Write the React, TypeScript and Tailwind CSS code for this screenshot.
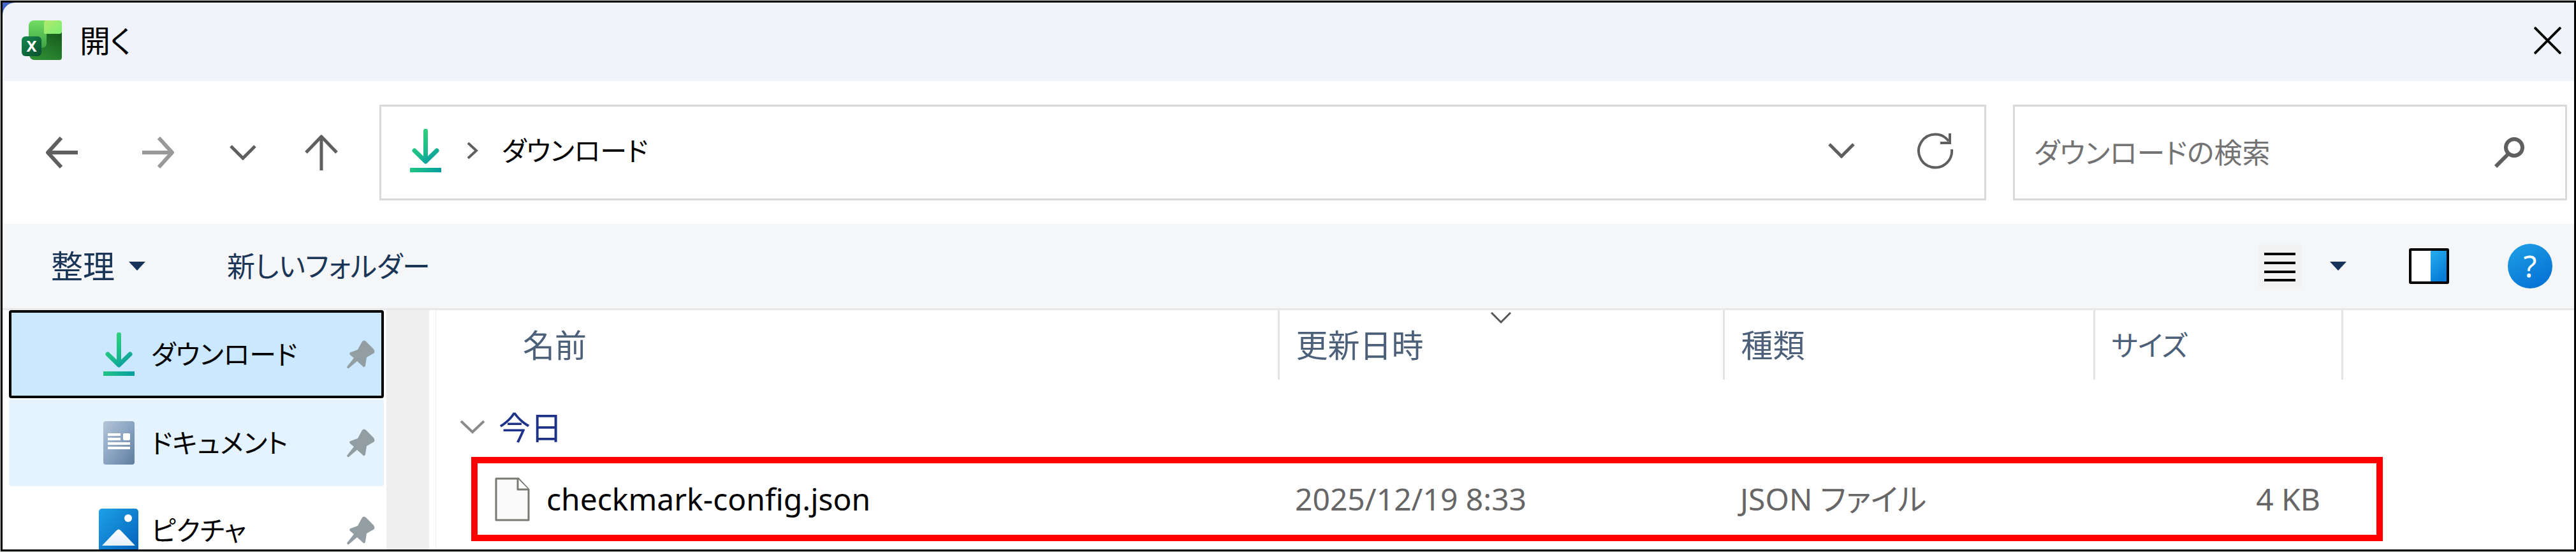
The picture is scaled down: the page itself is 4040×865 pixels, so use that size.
import { ReactNode } from "react"

interface IconProps {
    className?: string
}

const ExcelIcon: React.FC = () => (
    <svg width="63" height="63" viewBox="0 0 63 63">
        <defs>
            <linearGradient id="excel-lime" x1="0" y1="0" x2="1" y2="1">
                <stop offset="0" stopColor="#b4ea6c" />
                <stop offset="1" stopColor="#78ee72" />
            </linearGradient>
            <linearGradient id="excel-mid" x1="0" y1="0" x2="0" y2="1">
                <stop offset="0" stopColor="#72dc62" />
                <stop offset="1" stopColor="#3fa445" />
            </linearGradient>
            <linearGradient id="excel-dark" x1="1" y1="0" x2="0.4" y2="1">
                <stop offset="0" stopColor="#135a1c" />
                <stop offset="1" stopColor="#2f8c33" />
            </linearGradient>
            <linearGradient id="excel-badge" x1="0" y1="0" x2="1" y2="1">
                <stop offset="0" stopColor="#15884b" />
                <stop offset="1" stopColor="#0a4f30" />
            </linearGradient>
        </defs>
        <path d="M12 18h51v40a4 4 0 0 1-4 4H20a8 8 0 0 1-8-8z" fill="url(#excel-dark)" />
        <path d="M19 0h20v36a7 7 0 0 1-7 7H11V8a8 8 0 0 1 8-8z" fill="url(#excel-mid)" />
        <path d="M39 0h20a4 4 0 0 1 4 4v13a4 4 0 0 1-4 4H35V4a4 4 0 0 1 4-4z" fill="url(#excel-lime)" />
        <rect y="25" width="31" height="31" rx="6" fill="url(#excel-badge)" />
        <text x="15.500" y="49" textAnchor="middle" fontSize="24" fontWeight="700" fill="#fff">
            X
        </text>
    </svg>
)

const DownloadIcon: React.FC<IconProps> = ({ className }) => (
    <svg width="49" height="68" viewBox="0 0 49 68" fill="none" className={className}>
        <defs>
            <linearGradient id="dl" gradientUnits="userSpaceOnUse" x1="8" y1="10" x2="40" y2="56">
                <stop offset="0" stopColor="#2fd07c" />
                <stop offset="0.500" stopColor="#1cbd8b" />
                <stop offset="1" stopColor="#0494a6" />
            </linearGradient>
            <linearGradient id="dl-bar" gradientUnits="userSpaceOnUse" x1="0" y1="0" x2="49" y2="0">
                <stop offset="0" stopColor="#22c584" />
                <stop offset="1" stopColor="#069da0" />
            </linearGradient>
        </defs>
        <path d="M24.500 3v46M7 34l17.500 17L42 34" stroke="url(#dl)" strokeWidth="7" strokeLinecap="round" strokeLinejoin="round" />
        <path d="M0 61h49v7H0z" fill="url(#dl-bar)" />
    </svg>
)

const DocumentIcon: React.FC = () => (
    <svg width="49" height="68" viewBox="0 0 49 68">
        <defs>
            <linearGradient id="doc" x1="0" y1="0" x2="1" y2="1">
                <stop offset="0" stopColor="#b5c5d8" />
                <stop offset="0.500" stopColor="#8aa4c2" />
                <stop offset="1" stopColor="#5f7c9e" />
            </linearGradient>
        </defs>
        <rect width="49" height="68" rx="4" fill="url(#doc)" />
        <path d="M7 19h20v4H7zM7 26h20v4H7zM7 33h35v4H7zM7 40h35v4H7z" fill="#fff" />
        <rect x="31" y="19" width="11" height="11" rx="2" fill="#fff" />
    </svg>
)

const PictureIcon: React.FC = () => (
    <svg width="62" height="68" viewBox="0 0 62 68">
        <defs>
            <linearGradient id="pic" x1="0" y1="0" x2="1" y2="1">
                <stop offset="0" stopColor="#1ca2e8" />
                <stop offset="1" stopColor="#0560b8" />
            </linearGradient>
            <linearGradient id="hill" x1="0" y1="0" x2="0" y2="1">
                <stop offset="0" stopColor="#ffffff" />
                <stop offset="1" stopColor="#e4f1fc" />
            </linearGradient>
        </defs>
        <rect width="62" height="68" rx="5" fill="url(#pic)" />
        <circle cx="46" cy="15" r="6" fill="#fff" />
        <path d="M5 58l23-24q3-3 6 0l23 24z" fill="url(#hill)" />
    </svg>
)

const PinIcon: React.FC = () => (
    <svg width="44" height="45" viewBox="0 0 44 45" fill="#939ea3">
        <path d="M24 2q3-3 6 0l12 12q2 3 1 6l-12 7-2 13q-1 3-3 2L16 33 3 44q-2 1-3-2l11-14-6-5q-2-3 1-4l11-4z" />
    </svg>
)

const ArrowIcon: React.FC<IconProps> = ({ className }) => (
    <svg width="50" height="50" viewBox="0 0 50 50" fill="none" stroke="currentColor" strokeWidth="6" className={className}>
        <path d="M50 25H4M24 2L3 25l21 23" strokeLinejoin="round" />
    </svg>
)

const UpIcon: React.FC = () => (
    <svg width="52" height="56" viewBox="0 0 52 56" fill="none" stroke="currentColor" strokeWidth="5">
        <path d="M26 56V4M2 28L26 3l24 25" strokeLinejoin="round" />
    </svg>
)

const ChevronIcon: React.FC<IconProps> = ({ className }) => (
    <svg width="42" height="24" viewBox="0 0 42 24" fill="none" stroke="currentColor" strokeWidth="5" className={className}>
        <path d="M2 2l19 19L40 2" />
    </svg>
)

const RefreshIcon: React.FC = () => (
    <svg width="57" height="57" viewBox="0 0 57 57" fill="none" stroke="currentColor" strokeWidth="4">
        <path d="M54 26A26 26 0 1 1 49 13" />
        <path d="M51 1v15H36" />
    </svg>
)

const SearchIcon: React.FC = () => (
    <svg width="48" height="48" viewBox="0 0 48 48" fill="none" stroke="currentColor" strokeWidth="6">
        <circle cx="32" cy="16" r="13" />
        <path d="M23 26L3 46" />
    </svg>
)

const CloseIcon: React.FC = () => (
    <svg width="43" height="43" viewBox="0 0 43 43" stroke="#000" strokeWidth="4">
        <path d="M1 1l41 41M42 1L1 42" />
    </svg>
)

const TriangleIcon: React.FC = () => (
    <svg width="26" height="14" viewBox="0 0 26 14" fill="#18335a">
        <path d="M0 0h26L13 14z" />
    </svg>
)

const ListIcon: React.FC = () => (
    <svg width="66" height="68" viewBox="0 0 66 68">
        <path d="M0 0h66v68H0z" fill="#f2f2f2" />
        <path d="M8 15h49M8 29h49M8 43h49M8 56h49" stroke="#000" strokeWidth="4" />
    </svg>
)

const PaneIcon: React.FC = () => (
    <svg width="63" height="56" viewBox="0 0 63 56">
        <defs>
            <linearGradient id="pane" x1="0" y1="0" x2="0.500" y2="1">
                <stop offset="0" stopColor="#28b0ee" />
                <stop offset="1" stopColor="#0479d6" />
            </linearGradient>
        </defs>
        <rect x="2" y="2" width="59" height="52" rx="1" fill="#fff" />
        <path d="M34 2h27v52H34z" fill="url(#pane)" />
        <rect x="2" y="2" width="59" height="52" rx="1" fill="none" stroke="#000" strokeWidth="4" />
    </svg>
)

const HelpIcon: React.FC = () => (
    <svg width="70" height="70" viewBox="0 0 70 70">
        <defs>
            <linearGradient id="help" x1="0.200" y1="0" x2="0.800" y2="1">
                <stop offset="0" stopColor="#1d9de4" />
                <stop offset="1" stopColor="#0470d4" />
            </linearGradient>
        </defs>
        <circle cx="35" cy="35" r="35" fill="url(#help)" />
        <text x="35" y="53" textAnchor="middle" fontSize="48" fill="#fff">
            ?
        </text>
    </svg>
)

const FileIcon: React.FC = () => (
    <svg width="55" height="69" viewBox="0 0 55 69" stroke="#7b7974" strokeWidth="3" strokeLinejoin="round">
        <path d="M2 2h35l16 17v48H2z" fill="#fafafa" />
        <path d="M36 2v17h17" fill="#fff" />
    </svg>
)

interface PlaceProps {
    label: string
    icon: ReactNode
    className?: string
}

const Place: React.FC<PlaceProps> = ({ label, icon, className = "" }) => (
    <button type="button" className={`flex h-[138px] w-full shrink-0 items-center pr-[14px] text-left text-[42px] text-black ${className}`}>
        <span className="ml-[141px] flex w-[62px] justify-center">{icon}</span>
        <span className="ml-5 flex-1 leading-none">{label}</span>
        <PinIcon />
    </button>
)

const TitleBar: React.FC = () => (
    <header className="bg-[#4468c8]">
        <div className="flex h-[123px] items-center justify-between rounded-tl-[20px] bg-[#f0f3fa] pr-5 pb-1 pl-[30px]">
            <div className="flex items-center gap-7">
                <ExcelIcon />
                <h1 className="text-[48px] leading-none text-black">開く</h1>
            </div>
            <button type="button" aria-label="閉じる">
                <CloseIcon />
            </button>
        </div>
    </header>
)

const NavigationBar: React.FC = () => (
    <div className="flex h-[224px] items-center bg-white pr-[11px] pl-[68px] text-[#5f5f5f]">
        <button type="button" aria-label="戻る">
            <ArrowIcon />
        </button>
        <button type="button" aria-label="進む" className="ml-[101px] text-[#999999]">
            <ArrowIcon className="rotate-180" />
        </button>
        <button type="button" aria-label="最近表示した場所" className="ml-[87px]">
            <ChevronIcon />
        </button>
        <button type="button" aria-label="上へ" className="ml-[76px]">
            <UpIcon />
        </button>
        <div className="ml-[65px] flex h-[150px] flex-1 items-center border-[3px] border-[#d9d9d9] pr-12 pb-1.5 pl-[45px]">
            <DownloadIcon />
            <svg width="18" height="26" viewBox="0 0 18 26" fill="none" stroke="currentColor" strokeWidth="4" className="ml-10">
                <path d="M2 1l13 12L2 25" />
            </svg>
            <button type="button" className="ml-[37px] text-[42px] leading-none text-black">
                ダウンロード
            </button>
            <button type="button" aria-label="以前の場所" className="ml-auto">
                <ChevronIcon />
            </button>
            <button type="button" aria-label="最新の情報に更新" className="ml-[98px]">
                <RefreshIcon />
            </button>
        </div>
        <div className="ml-[42px] flex h-[150px] w-[869px] items-center border-[3px] border-[#d9d9d9] pr-16 pl-[30px]">
            <input
                type="text"
                aria-label="検索"
                placeholder="ダウンロードの検索"
                className="h-full min-w-0 flex-1 text-[44px] text-black outline-none placeholder:text-[#737373]"
            />
            <button type="button" aria-label="検索を実行">
                <SearchIcon />
            </button>
        </div>
    </div>
)

const Toolbar: React.FC = () => (
    <div className="flex h-[135px] items-center border-b-[3px] border-[#e6e8ea] bg-[#f4f6f8] pr-[34px] pl-[76px] text-[#1b3557]">
        <button type="button" className="flex items-center gap-[22px] text-[50px] leading-none">
            整理
            <TriangleIcon />
        </button>
        <button type="button" className="ml-32 text-[44px] leading-none">
            新しいフォルダー
        </button>
        <div className="ml-auto flex items-center">
            <button type="button" aria-label="表示方法">
                <ListIcon />
            </button>
            <button type="button" aria-label="その他のオプション" className="ml-[45px]">
                <TriangleIcon />
            </button>
            <button type="button" aria-label="プレビュー ウィンドウ" className="ml-[98px]">
                <PaneIcon />
            </button>
            <button type="button" aria-label="ヘルプ" className="ml-[92px]">
                <HelpIcon />
            </button>
        </div>
    </div>
)

const Sidebar: React.FC = () => (
    <nav className="flex w-[669px] shrink-0 overflow-hidden bg-white">
        <div className="flex flex-1 flex-col pr-1 pl-[10px]">
            <Place label="ダウンロード" icon={<DownloadIcon />} className="rounded-sm bg-[#cce8ff] inset-ring-4 inset-ring-black" />
            <Place label="ドキュメント" icon={<DocumentIcon />} className="rounded-sm border-t-2 border-white bg-[#e5f3ff]" />
            <Place label="ピクチャ" icon={<PictureIcon />} />
        </div>
        <div className="w-[67px] bg-[#efefef]"></div>
    </nav>
)

const FileList: React.FC = () => (
    <main className="relative ml-[10px] flex-1 overflow-hidden border-l border-[#efefef] bg-white">
        <table className="w-full table-fixed border-collapse text-left">
            <colgroup>
                <col />
                <col className="w-[698px]" />
                <col className="w-[581px]" />
                <col className="w-[389px]" />
                <col className="w-[364px]" />
            </colgroup>
            <thead>
                <tr className="h-[109px] text-[50px] leading-none text-[#4c607a]">
                    <th scope="col" className="border-r-[3px] border-[#e3e3e3] pl-[136px] font-normal">
                        名前
                    </th>
                    <th scope="col" className="relative border-r-[3px] border-[#e3e3e3] pl-[26px] font-normal">
                        更新日時
                        <svg width="32" height="19" viewBox="0 0 32 19" fill="none" stroke="#555" strokeWidth="3" className="absolute top-[3px] left-1/2 -translate-x-1/2">
                            <path d="M1 1l15 15L31 1" />
                        </svg>
                    </th>
                    <th scope="col" className="border-r-[3px] border-[#e3e3e3] pl-[26px] font-normal">
                        種類
                    </th>
                    <th scope="col" className="border-r-[3px] border-[#e3e3e3] pl-[26px] text-[44px] font-normal">
                        サイズ
                    </th>
                    <td></td>
                </tr>
            </thead>
            <tbody>
                <tr className="h-[121px]">
                    <th scope="rowgroup" colSpan={5} className="pt-7 pl-[38px] font-normal">
                        <button type="button" className="flex items-center gap-[22px] text-[50px] leading-none text-[#1e3287]">
                            <svg width="38" height="21" viewBox="0 0 38 21" fill="none" stroke="#8a8a8a" strokeWidth="4">
                                <path d="M1 1l18 17L37 1" />
                            </svg>
                            今日
                        </button>
                    </th>
                </tr>
                <tr className="h-[132px] text-[48px] leading-none text-[#666666]">
                    <td className="pl-[92px] text-black">
                        <div className="flex items-center gap-[26px]">
                            <FileIcon />
                            checkmark-config.json
                        </div>
                    </td>
                    <td className="pl-[26px]">2025/12/19 8:33</td>
                    <td className="pl-[26px]">JSON ファイル</td>
                    <td className="pr-[34px] text-right">4 KB</td>
                    <td></td>
                </tr>
            </tbody>
        </table>
        {/* red frame around the file to choose */}
        <div className="pointer-events-none absolute top-[230px] right-[300px] left-[55px] h-[132px] border-[10px] border-[#ff0000]"></div>
    </main>
)

const App: React.FC = () => {
    return (
        <div className="h-screen w-full bg-[#c8cdc8] pt-px pb-px pl-px font-['Noto_Sans','Noto_Sans_CJK_JP',sans-serif] [font-feature-settings:'palt']" lang="ja">
            <div className="flex h-full flex-col overflow-hidden border-[3px] border-black bg-white">
                <TitleBar />
                <NavigationBar />
                <Toolbar />
                <div className="flex min-h-0 flex-1">
                    <Sidebar />
                    <FileList />
                </div>
            </div>
        </div>
    )
}

export default App
